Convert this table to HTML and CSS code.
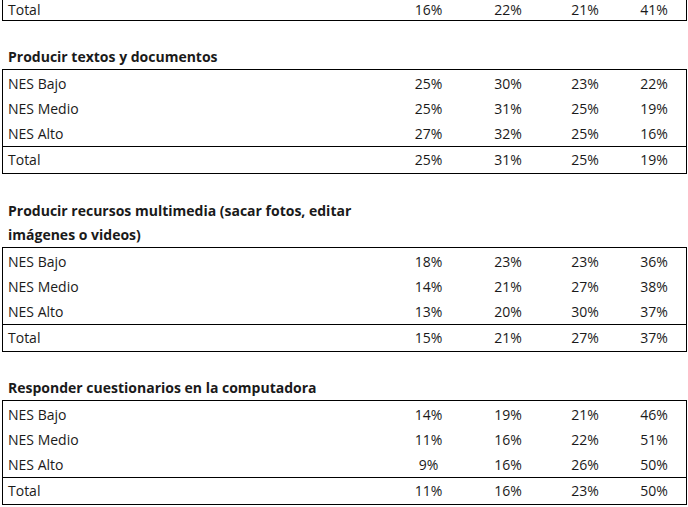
FILE: index.html
```html
<!DOCTYPE html>
<html lang="es">
<head>
<meta charset="utf-8">
<title>Tabla</title>
<link rel="stylesheet" href="styles.css">
</head>
<body>
<div class="page">
  <section class="block first">
    <div class="table">
      <div class="row total">
        <div class="label">Total</div><div class="num">16%</div><div class="num">22%</div><div class="num">21%</div><div class="num">41%</div>
      </div>
    </div>
  </section>

  <section class="block">
    <div class="title">Producir textos y documentos</div>
    <div class="table">
      <div class="group">
        <div class="row"><div class="label">NES Bajo</div><div class="num">25%</div><div class="num">30%</div><div class="num">23%</div><div class="num">22%</div></div>
        <div class="row"><div class="label">NES Medio</div><div class="num">25%</div><div class="num">31%</div><div class="num">25%</div><div class="num">19%</div></div>
        <div class="row"><div class="label">NES Alto</div><div class="num">27%</div><div class="num">32%</div><div class="num">25%</div><div class="num">16%</div></div>
      </div>
      <div class="row total"><div class="label">Total</div><div class="num">25%</div><div class="num">31%</div><div class="num">25%</div><div class="num">19%</div></div>
    </div>
  </section>

  <section class="block wide-gap">
    <div class="title">Producir recursos multimedia (sacar fotos, editar<br>imágenes o videos)</div>
    <div class="table">
      <div class="group">
        <div class="row"><div class="label">NES Bajo</div><div class="num">18%</div><div class="num">23%</div><div class="num">23%</div><div class="num">36%</div></div>
        <div class="row"><div class="label">NES Medio</div><div class="num">14%</div><div class="num">21%</div><div class="num">27%</div><div class="num">38%</div></div>
        <div class="row"><div class="label">NES Alto</div><div class="num">13%</div><div class="num">20%</div><div class="num">30%</div><div class="num">37%</div></div>
      </div>
      <div class="row total"><div class="label">Total</div><div class="num">15%</div><div class="num">21%</div><div class="num">27%</div><div class="num">37%</div></div>
    </div>
  </section>

  <section class="block">
    <div class="title">Responder cuestionarios en la computadora</div>
    <div class="table">
      <div class="group">
        <div class="row"><div class="label">NES Bajo</div><div class="num">14%</div><div class="num">19%</div><div class="num">21%</div><div class="num">46%</div></div>
        <div class="row"><div class="label">NES Medio</div><div class="num">11%</div><div class="num">16%</div><div class="num">22%</div><div class="num">51%</div></div>
        <div class="row"><div class="label">NES Alto</div><div class="num">9%</div><div class="num">16%</div><div class="num">26%</div><div class="num">50%</div></div>
      </div>
      <div class="row total"><div class="label">Total</div><div class="num">11%</div><div class="num">16%</div><div class="num">23%</div><div class="num">50%</div></div>
    </div>
  </section>
</div>
</body>
</html>
```

FILE: styles.css
```css
html, body {
  margin: 0;
  padding: 0;
  background: #ffffff;
}

.page {
  padding-left: 2px;
  width: 685px;
  font-family: "Open Sans", "Liberation Sans", sans-serif;
  font-size: 14px;
  color: #1a1a1a;
}

.block {
  margin-top: 23px;
}

.block.wide-gap {
  margin-top: 24px;
}

.block.first {
  margin-top: 0;
}

.title {
  font-weight: 700;
  line-height: 24px;
  padding-top: 1px;
  padding-left: 6px;
}

.table {
  border-left: 1px solid #000;
  border-right: 1px solid #000;
  border-top: 1px solid #000;
}

.first .table {
  border-top: none;
}

.group {
  padding-top: 1px;
}

.row {
  display: grid;
  grid-template-columns: 386px 79px 80px 74px 64px;
  line-height: 24px;
  padding-top: 1px;
}

.row.total {
  border-top: 1px solid #000;
  border-bottom: 1px solid #000;
  padding-bottom: 1px;
}

.first .row.total {
  border-top: none;
  line-height: 20px;
  padding-top: 0;
  padding-bottom: 0;
}

.label {
  padding-left: 5px;
}

.num {
  text-align: center;
}
```
